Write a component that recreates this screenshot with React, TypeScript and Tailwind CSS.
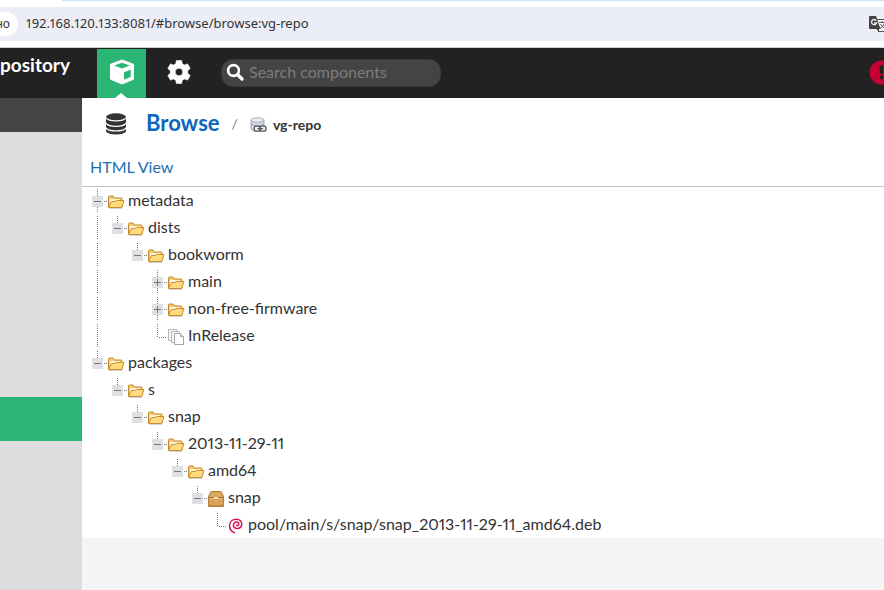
import { Fragment } from "react";

type Kind = "folder" | "files" | "chest" | "debian";
type Elbow = "line" | "empty" | "tee" | "end" | "leaf";

interface TreeNode {
  label: string;
  kind: Kind;
  expanded?: boolean;
  children?: TreeNode[];
}

const tree: TreeNode[] = [
  {
    label: "metadata",
    kind: "folder",
    expanded: true,
    children: [
      {
        label: "dists",
        kind: "folder",
        expanded: true,
        children: [
          {
            label: "bookworm",
            kind: "folder",
            expanded: true,
            children: [
              { label: "main", kind: "folder", expanded: false },
              { label: "non-free-firmware", kind: "folder", expanded: false },
              { label: "InRelease", kind: "files" },
            ],
          },
        ],
      },
    ],
  },
  {
    label: "packages",
    kind: "folder",
    expanded: true,
    children: [
      {
        label: "s",
        kind: "folder",
        expanded: true,
        children: [
          {
            label: "snap",
            kind: "folder",
            expanded: true,
            children: [
              {
                label: "2013-11-29-11",
                kind: "folder",
                expanded: true,
                children: [
                  {
                    label: "amd64",
                    kind: "folder",
                    expanded: true,
                    children: [
                      {
                        label: "snap",
                        kind: "chest",
                        expanded: true,
                        children: [
                          { label: "pool/main/s/snap/snap_2013-11-29-11_amd64.deb", kind: "debian" },
                        ],
                      },
                    ],
                  },
                ],
              },
            ],
          },
        ],
      },
    ],
  },
];

function ElbowLines({ type, expanded }: { type: Elbow; expanded?: boolean }) {
  const full = type === "line" || type === "tee";
  return (
    <svg width="20" height="27" viewBox="0 0 20 27" shapeRendering="crispEdges" aria-hidden="true">
      {type !== "empty" && (
        <path d={full ? "M9.5 2V25" : "M9.5 2V16"} stroke="#777" strokeDasharray="1 1" />
      )}
      {(type === "leaf" || expanded !== undefined) && (
        <path d={type === "leaf" ? "M11 15.5H19" : "M16 14.5H19"} stroke="#777" strokeDasharray="1 1" />
      )}
      {expanded !== undefined && (
        <>
          <rect x="4" y="9" width="11" height="11" fill="#dfe0e3" />
          <path d="M6 14.5H13" stroke="#777" />
          {!expanded && <path d="M9.5 11V18" stroke="#777" />}
        </>
      )}
    </svg>
  );
}

function NodeIcon({ kind }: { kind: Kind }) {
  if (kind === "folder")
    return (
      <svg width="17" height="16" viewBox="0 0 17 16" aria-hidden="true">
        <path d="M.5 13V3Q.5 2 1.5 2H5L6.5 4H13Q14 4 14 5V13Z" fill="#f3c96b" stroke="#c48a2c" />
        <path d="M2 5H12V9H2Z" fill="#fff6dc" />
        <path d="M.5 13.5L3.5 7.5H7L8.2 6.5H15.9L13.7 13.5Z" fill="#ffdb7d" stroke="#c98c30" strokeLinejoin="round" />
        <path d="M1 14.5H14" stroke="#aaa" strokeOpacity=".5" />
      </svg>
    );
  if (kind === "files")
    return (
      <svg width="17" height="16" viewBox="0 0 17 16" aria-hidden="true">
        <path d="M.5 .5H8.5V11.5H.5Z" fill="#f6f6f6" stroke="#b4b4b4" />
        <path d="M3.5 2.5H11.5V13.5H3.5Z" fill="#f6f6f6" stroke="#b4b4b4" />
        <path d="M6.5 4.5H12.5L15.5 7.5V15.5H6.5Z" fill="#fff" stroke="#a2a2a2" />
        <path d="M12.5 4.5V7.5H15.5" fill="#ddd" stroke="#aaa" />
      </svg>
    );
  if (kind === "chest")
    return (
      <svg width="17" height="16" viewBox="0 0 17 16" aria-hidden="true">
        <path d="M.5 6L2 2Q2.6 .5 4 .5H12Q13.4 .5 14 2L15.5 6V15.5H.5Z" fill="#d8a258" stroke="#b57b36" />
        <path d="M1.5 5.5L2.8 2.4Q3.2 1.5 4.2 1.5H11.8Q12.8 1.5 13.2 2.4L14.5 5.5Z" fill="#deaa62" />
        <path d="M0 6.5H16" stroke="#a26c2c" />
        <path d="M1 7.5H15" stroke="#ecc689" />
        <rect x="6" y="6" width="4" height="2" fill="#f3dfb4" />
        <path d="M1 14.5H15" stroke="#c08a46" />
      </svg>
    );
  return (
    <svg width="17" height="16" viewBox="0 0 17 16" fill="none" stroke="#d3145a" strokeLinecap="round" aria-hidden="true">
      <path
        d="M6.4 14.6C3.4 13.4 1.3 10.8 1.5 7.3C1.8 3.4 4.8 1.2 8.3 1.2C11.8 1.2 14 3.4 13.8 6.4C13.6 9.3 11.4 10.8 9 10.5C6.8 10.2 5.3 8.8 5.4 7C5.5 5 7 3.9 8.7 4C10.3 4.1 11 5.2 10.7 6.6C10.4 7.6 9.4 8 8.5 7.4"
        strokeWidth="1.5"
      />
    </svg>
  );
}

function Branch({ nodes, prefix = [] }: { nodes: TreeNode[]; prefix?: Elbow[] }) {
  return (
    <>
      {nodes.map((node, i) => {
        const last = i === nodes.length - 1;
        const leaf = node.expanded === undefined;
        const elbow: Elbow = leaf ? "leaf" : last ? "end" : "tee";
        return (
          <Fragment key={node.label}>
            <div
              role="treeitem"
              aria-level={prefix.length + 1}
              aria-expanded={node.expanded}
              className="flex h-[27px] items-center"
            >
              {prefix.map((p, k) => (
                <ElbowLines key={k} type={p} />
              ))}
              {leaf ? (
                <ElbowLines type={elbow} />
              ) : (
                <button type="button" aria-label={`Toggle ${node.label}`}>
                  <ElbowLines type={elbow} expanded={node.expanded} />
                </button>
              )}
              <span className="mr-[3px] pt-[3px]">
                <NodeIcon kind={node.kind} />
              </span>
              <span className="whitespace-nowrap pb-0.5 text-base">{node.label}</span>
            </div>
            {node.expanded && node.children && (
              <Branch nodes={node.children} prefix={[...prefix, last ? "empty" : "line"]} />
            )}
          </Fragment>
        );
      })}
    </>
  );
}

function AddressBar() {
  return (
    <div className="border-b border-[#c9d3cf] bg-white">
      <div className="ml-[62px] h-px bg-[#cfe0fb]" />
      <div className="mt-1.5 mb-1.5 flex h-[34px] items-center bg-[#ebeef7] font-['Noto_Sans',sans-serif]">
        <span className="flex h-6 w-[18px] shrink-0 items-center justify-end rounded-r-full bg-white pr-2 text-xs text-[#333]">
          но
        </span>
        <input
          aria-label="Address"
          defaultValue="192.168.120.133:8081/#browse/browse:vg-repo"
          className="ml-2 min-w-0 flex-1 bg-transparent text-[13px] text-[#333] outline-none"
        />
        <button type="button" aria-label="Translate" className="w-4 shrink-0 overflow-hidden">
          <svg width="22" height="18" viewBox="0 0 22 18" className="max-w-none">
            <path d="M8.5 4.5H20.5V16.5H10" fill="#fff" stroke="#555" />
            <path d="M2 1H8L12.5 14H2Q1 14 1 13V2Q1 1 2 1Z" fill="#444" />
            <path d="M8.5 14L11 17V14Z" fill="#333" />
            <path d="M8.3 5.6A2.6 2.6 0 1 0 8.6 8H6.2" fill="none" stroke="#eee" strokeWidth="1.3" />
            <path d="M11 7.5H18M14.3 6V7.5M16.8 7.5Q15.5 11.5 12 13.5M12.4 9Q14 12 17 13.4" fill="none" stroke="#555" />
          </svg>
        </button>
      </div>
    </div>
  );
}

function Header() {
  return (
    <header className="flex h-[50px] items-center overflow-hidden bg-[#222] pb-0.5 text-white">
      <div className="flex w-[97px] shrink-0 self-start pt-[3px]">
        <span className="text-[19px] leading-7 font-bold">pository</span>
      </div>
      <button type="button" aria-label="Browse" className="relative -mb-0.5 flex size-[49px] shrink-0 items-center justify-center self-end bg-[#2ab574] pb-1">
        <svg width="26" height="26" viewBox="0 0 26 26">
          <path d="M13 1L24.5 5.3V20.2L13 25L1.5 20.2V5.3Z" fill="#fff" stroke="#fff" strokeLinejoin="round" />
          <path d="M13 3.7L20.8 6.4L13 9.5L5.2 6.4Z" fill="#2ab574" />
          <path d="M15 13.3L21.7 10.7V17.7L15 20.7Z" fill="#2ab574" />
        </svg>
        <svg className="absolute bottom-0 left-[18px]" width="12" height="5" viewBox="0 0 12 5">
          <path d="M0 5L6 0L12 5Z" fill="#fff" />
        </svg>
      </button>
      <button type="button" aria-label="Administration" className="ml-5 shrink-0">
        <svg width="26" height="26" viewBox="0 0 26 26">
          <path
            d="M10.4 1.5H15.6L16.3 4.8L18.3 6L21.6 4.9L24.2 9.4L21.7 11.8V14.2L24.2 16.6L21.6 21.1L18.3 20L16.3 21.2L15.6 24.5H10.4L9.7 21.2L7.7 20L4.4 21.1L1.8 16.6L4.3 14.2V11.8L1.8 9.4L4.4 4.9L7.7 6L9.7 4.8ZM13 9.2A3.8 3.8 0 1 0 13 16.8A3.8 3.8 0 1 0 13 9.2Z"
            fill="#fff"
            fillRule="evenodd"
            stroke="#fff"
            strokeLinejoin="round"
            strokeWidth=".6"
          />
        </svg>
      </button>
      <label className="mt-0.5 ml-[29px] flex h-7 w-[220px] items-center rounded-xl border border-[#383838] bg-[#444] pl-1">
        <svg className="mb-0.5" width="18" height="18" viewBox="0 0 18 18" fill="none" stroke="#fff" aria-hidden="true">
          <circle cx="7.5" cy="7.5" r="5.4" strokeWidth="2.6" />
          <path d="M11.5 11.5L16 16" strokeWidth="3.2" strokeLinecap="round" />
        </svg>
        <input
          aria-label="Search components"
          placeholder="Search components"
          className="ml-[5px] min-w-0 flex-1 bg-transparent pb-0.5 text-base outline-none placeholder:text-[#7c7c7c]"
        />
      </label>
      <button type="button" aria-label="System status" className="ml-auto w-[15px] shrink-0 overflow-hidden">
        <svg width="25" height="25" viewBox="0 0 25 25" className="max-w-none">
          <circle cx="12.5" cy="12.5" r="12" fill="#c70034" />
          <path d="M10.5 5.5H14.5L14 14H11Z" fill="#222" />
          <circle cx="12.5" cy="17.5" r="2" fill="#222" />
        </svg>
      </button>
    </header>
  );
}

export default function App() {
  return (
    <div className="flex min-h-screen flex-col overflow-hidden bg-white font-[Lato,sans-serif] text-[#333] proportional-nums">
      <AddressBar />
      <Header />
      <div className="flex flex-1">
        <aside className="flex w-[82px] shrink-0 flex-col bg-[#ddd]">
          <div className="h-[34px] bg-[#444]" />
          <a href="#browse" aria-label="Browse" className="mt-[265px] block h-11 bg-[#2ab574]" />
        </aside>
        <main className="flex min-w-0 flex-1 flex-col bg-[#f4f4f4]">
          <div className="bg-white">
            <div className="flex h-[50px] items-center pl-6">
              <svg className="mt-0.5" width="20" height="22" viewBox="0 0 20 24" preserveAspectRatio="none" fill="#333" aria-hidden="true">
                <ellipse cx="10" cy="4.2" rx="10" ry="3.8" />
                <path d="M0 6.4Q2 9.2 10 9.2T20 6.4V10.2Q18 14 10 14T0 10.2Z" />
                <path d="M0 12.4Q2 15.4 10 15.4T20 12.4V15.2Q18 18.8 10 18.8T0 15.2Z" />
                <path d="M0 17.4Q2 20.2 10 20.2T20 17.4V19.8Q18 23.4 10 23.4T0 19.8Z" />
              </svg>
              <h1 className="ml-5 pb-0.5 text-[22px] font-bold text-[#0b66bb]">
                <a href="#browse">Browse</a>
              </h1>
              <span className="ml-3 pt-0.5 text-sm text-[#777]">/</span>
              <svg className="mt-1 ml-3 shrink-0" width="18" height="16" viewBox="0 0 18 16" aria-hidden="true">
                <path d="M1 3V12Q2 14 7.5 14T14 12V3Z" fill="#cfd6df" stroke="#98a0aa" strokeWidth=".8" />
                <ellipse cx="7.5" cy="3" rx="6.5" ry="2.2" fill="#e9eef4" stroke="#98a0aa" strokeWidth=".8" />
                <path d="M1 7Q3 9 7.5 9T14 7" fill="none" stroke="#98a0aa" />
                <rect x="4.2" y="9.2" width="6" height="5" rx="2" fill="#eee" stroke="#555" strokeWidth="1.3" />
                <rect x="10" y="9.2" width="6" height="5" rx="2" fill="#eee" stroke="#555" strokeWidth="1.3" />
                <path d="M7.5 11.7H13" stroke="#555" strokeWidth="1.3" />
              </svg>
              <span className="ml-[5px] pt-1 text-sm font-bold">vg-repo</span>
            </div>
            <div className="flex h-[39px] items-center border-b border-[#c3c3c3] pl-2">
              <a href="#html" className="text-base text-[#1c6dab]">
                HTML View
              </a>
            </div>
            <div role="tree" aria-label="vg-repo" className="pl-1.5">
              <Branch nodes={tree} />
            </div>
          </div>
        </main>
      </div>
    </div>
  );
}
